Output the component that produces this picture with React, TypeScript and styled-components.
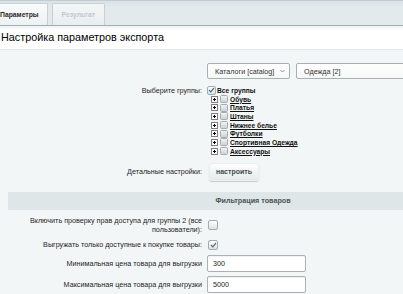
import React from 'react';
import styled, { createGlobalStyle, css } from 'styled-components';

const GlobalStyle = createGlobalStyle`
  html, body { margin: 0; padding: 0; }
  body {
    background: #f3f6f7;
    font-family: "Liberation Sans", Arial, sans-serif;
    color: #000;
    overflow: hidden;
  }
`;

const Page = styled.div`
  width: 403px;
  height: 294px;
  overflow: hidden;
`;

const TabBar = styled.div`
  height: 26px;
  display: flex;
  align-items: flex-end;
  gap: 4px;
  background: linear-gradient(#d9e2e5, #e3eaec 30%, #e3eaec);
  border-top: 1px solid #c2ccd0;
  border-bottom: 1px solid #a3aeb1;
  box-sizing: border-box;
`;

const Tab = styled.div<{ $active?: boolean }>`
  height: 22px;
  display: flex;
  align-items: center;
  padding: 0 8px 1px;
  font-size: 6.8px;
  font-weight: bold;
  box-sizing: border-box;
  border: 1px solid #c8d0d3;
  border-bottom: none;
  border-radius: 2px 2px 0 0;
  ${(p) =>
    p.$active
      ? css`
          margin-left: -9px;
          background: linear-gradient(#fafbfb, #edf1f2);
          color: #2b2b2b;
        `
      : css`
          background: linear-gradient(#f3f6f6, #e9eef0);
          color: #c3c9cb;
          padding: 0 9px 1px;
        `}
`;

const TitleBand = styled.div`
  height: 24px;
  display: flex;
  align-items: center;
  padding: 0 0 2px 1px;
  box-sizing: border-box;
  background: linear-gradient(#eef2f3, #ffffff 20%, #ffffff);
  border-bottom: 1px solid #e2e7e9;
  font-size: 10.8px;
  color: #000;
`;

const Content = styled.div`
  width: 490px;
  padding: 13px 0 0 8px;
`;

const Row = styled.div<{ $mt?: number }>`
  display: grid;
  grid-template-columns: 194px 1fr;
  column-gap: 5px;
  align-items: center;
  margin-top: ${(p) => p.$mt ?? 0}px;
`;

const Label = styled.div<{ $top?: boolean }>`
  text-align: right;
  font-size: 7.2px;
  line-height: 9px;
  color: #1e1e1e;
  ${(p) => p.$top && css`align-self: start;`}
`;

const Controls = styled.div`
  display: flex;
  align-items: center;
  gap: 6px;
`;

const SelectBox = styled.div<{ $w: number }>`
  width: ${(p) => p.$w}px;
  height: 16px;
  box-sizing: border-box;
  border: 1px solid #a7b1b4;
  border-radius: 2px;
  background: linear-gradient(#ffffff, #f6f8f8);
  display: flex;
  align-items: center;
  justify-content: space-between;
  padding: 0 4px 0 7px;
  font-size: 7.2px;
  color: #333;
`;

const Chevron = () => (
  <svg width="5" height="4" viewBox="0 0 5 4">
    <path d="M0.5 1 L2.5 3 L4.5 1" fill="none" stroke="#6f7a7d" strokeWidth="0.8" />
  </svg>
);

const Tree = styled.div`
  display: flex;
  flex-direction: column;
`;

const TreeRow = styled.div<{ $child?: boolean }>`
  height: 8.7px;
  display: flex;
  align-items: center;
  gap: 1px;
  margin-left: ${(p) => (p.$child ? 4 : 0)}px;
  font-size: 6.7px;
  font-weight: bold;
  color: #111;
`;

const GroupLink = styled.span`
  text-decoration: underline;
  margin-left: 1px;
`;

const PlusBox = styled.span`
  position: relative;
  flex: none;
  width: 7px;
  height: 7px;
  box-sizing: border-box;
  border: 1px solid #808080;
  background: #fff;
  &::before,
  &::after {
    content: '';
    position: absolute;
    background: #000;
  }
  &::before {
    left: 1px;
    top: 2px;
    width: 3px;
    height: 1px;
  }
  &::after {
    left: 2px;
    top: 1px;
    width: 1px;
    height: 3px;
  }
`;

const TreeCheck = styled.span`
  flex: none;
  width: 8px;
  height: 8px;
  margin-left: 1px;
  box-sizing: border-box;
  border: 1px solid #a3abae;
  border-radius: 1.5px;
  background: linear-gradient(#f2f3f4, #cdd2d4);
`;

const DesignedCheck = styled.span<{ $size?: number }>`
  width: ${(p) => p.$size ?? 10}px;
  height: ${(p) => p.$size ?? 10}px;
  box-sizing: border-box;
  border: 1px solid #a2adb0;
  border-radius: 2px;
  background: linear-gradient(#ffffff, #dde3e5);
  display: flex;
  align-items: center;
  justify-content: center;
  flex: none;
`;

const Tick = ({ color = '#5b6b71' }: { color?: string }) => (
  <svg width="7" height="6" viewBox="0 0 7 6">
    <path d="M1 3 L2.8 4.8 L6 1" fill="none" stroke={color} strokeWidth="1.2" />
  </svg>
);

const Button = styled.div`
  width: 50px;
  height: 18px;
  box-sizing: border-box;
  border-radius: 3px;
  background: linear-gradient(#ffffff, #e3e9ea);
  box-shadow: 0 1px 1px rgba(0, 0, 0, 0.18), inset 0 0 0 1px #e9eeef;
  display: flex;
  align-items: center;
  justify-content: center;
  font-size: 7px;
  font-weight: bold;
  color: #3d4a4c;
  margin-left: 2px;
`;

const SectionHeader = styled.div`
  height: 18px;
  margin-top: 11px;
  background: #dfe6e7;
  display: flex;
  align-items: center;
  justify-content: center;
  font-size: 7.2px;
  font-weight: bold;
  color: #4a5557;
`;

const TextInput = styled.div`
  width: 99px;
  height: 17px;
  box-sizing: border-box;
  border: 1px solid #a9b2b5;
  border-radius: 2px;
  background: #fff;
  box-shadow: inset 0 1px 1px rgba(0, 0, 0, 0.06);
  display: flex;
  align-items: center;
  padding-left: 5px;
  font-size: 7.2px;
  color: #222;
`;

const groups = ['Обувь', 'Платья', 'Штаны', 'Нижнее белье', 'Футболки', 'Спортивная Одежда', 'Аксессуары'];

export default function App() {
  return (
    <Page>
      <GlobalStyle />
      <TabBar>
        <Tab $active>Параметры</Tab>
        <Tab>Результат</Tab>
      </TabBar>
      <TitleBand>Настройка параметров экспорта</TitleBand>
      <Content>
        <Row>
          <div />
          <Controls>
            <SelectBox $w={83}>
              Каталоги [catalog]
              <Chevron />
            </SelectBox>
            <SelectBox $w={170}>
              Одежда [2]
              <Chevron />
            </SelectBox>
          </Controls>
        </Row>
        <Row $mt={7}>
          <Label $top>Выберите группы:</Label>
          <Tree>
            <TreeRow>
              <DesignedCheck $size={9}>
                <Tick color="#3f6fa0" />
              </DesignedCheck>
              <span>Все группы</span>
            </TreeRow>
            {groups.map((g) => (
              <TreeRow $child key={g}>
                <PlusBox />
                <TreeCheck />
                <GroupLink>{g}</GroupLink>
              </TreeRow>
            ))}
          </Tree>
        </Row>
        <Row $mt={7}>
          <Label>Детальные настройки:</Label>
          <Controls>
            <Button>настроить</Button>
          </Controls>
        </Row>
        <SectionHeader>Фильтрация товаров</SectionHeader>
        <Row $mt={6}>
          <Label>
            Включить проверку прав доступа для группы 2 (все
            <br />
            пользователи):
          </Label>
          <Controls>
            <DesignedCheck style={{ marginLeft: 1 }} />
          </Controls>
        </Row>
        <Row $mt={6}>
          <Label>Выгружать только доступные к покупке товары:</Label>
          <Controls>
            <DesignedCheck style={{ marginLeft: 1 }}>
              <Tick />
            </DesignedCheck>
          </Controls>
        </Row>
        <Row $mt={5}>
          <Label>Минимальная цена товара для выгрузки</Label>
          <TextInput>300</TextInput>
        </Row>
        <Row $mt={4}>
          <Label>Максимальная цена товара для выгрузки</Label>
          <TextInput>5000</TextInput>
        </Row>
      </Content>
    </Page>
  );
}
